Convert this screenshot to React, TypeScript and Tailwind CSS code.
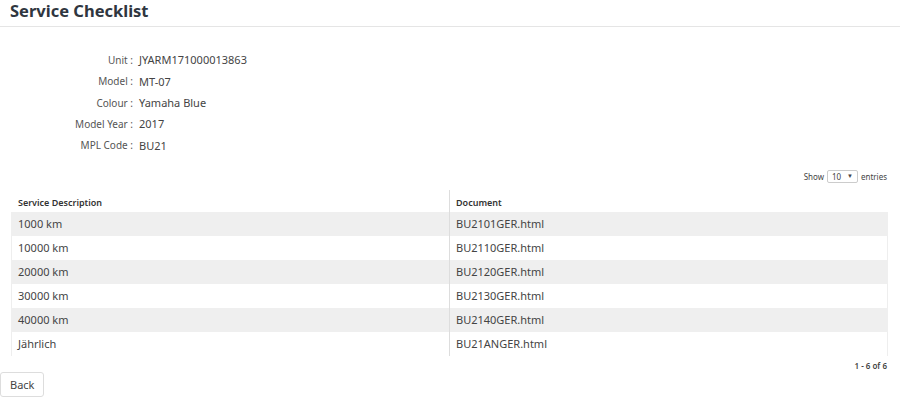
const info: [string, string][] = [
  ["Unit", "JYARM171000013863"],
  ["Model", "MT-07"],
  ["Colour", "Yamaha Blue"],
  ["Model Year", "2017"],
  ["MPL Code", "BU21"],
];

const rows: [string, string][] = [
  ["1000 km", "BU2101GER.html"],
  ["10000 km", "BU2110GER.html"],
  ["20000 km", "BU2120GER.html"],
  ["30000 km", "BU2130GER.html"],
  ["40000 km", "BU2140GER.html"],
  ["Jährlich", "BU21ANGER.html"],
];

export default function App() {
  return (
    <div
      className="w-[900px] h-[407px] bg-white text-[#333] overflow-hidden"
      style={{ fontFamily: '"Noto Sans", "Open Sans", sans-serif' }}
    >
      <div className="h-[27px] border-b border-[#e5e5e5] px-[10px]">
        <h1 className="text-[16.5px] leading-[22px] font-bold text-[#2f3640]">Service Checklist</h1>
      </div>

      <div className="mt-[23px] flex flex-col">
        {info.map(([k, v]) => (
          <div key={k} className="flex h-[21.3px] items-center text-[11px]">
            <span className="w-[133px] text-right text-[10px] text-[#555]">{k}&nbsp;:</span>
            <span className="ml-[6px] text-[#444]">{v}</span>
          </div>
        ))}
      </div>

      <div className="mt-[14px] flex justify-end items-center pr-[13px] text-[8px] text-[#444] gap-[3px]">
        <span>Show</span>
        <div className="flex items-center justify-between w-[31px] h-[13px] border border-[#ccc] rounded-[2px] px-[4px]">
          <span>10</span>
          <span className="text-[6px]">▼</span>
        </div>
        <span>entries</span>
      </div>

      <div className="mx-[11px] mt-[7px] w-[877px]">
        <div className="flex h-[22px] text-[9px] font-semibold text-[#333]">
          <div className="w-[438px] pl-[7px] h-full flex items-center pt-[3px]">Service Description</div>
          <div className="flex-1 pl-[6px] h-full flex items-center pt-[3px] border-l border-[#ddd]">Document</div>
        </div>
        {rows.map(([a, b], i) => (
          <div
            key={a}
            className={`flex h-[24px] items-center text-[11px] text-[#444] border-l border-r ${i % 2 === 0 ? "bg-[#efefef] border-[#efefef]" : "bg-white border-[#eee]"}`}
          >
            <div className="w-[437px] pl-[6px]">{a}</div>
            <div className="flex-1 h-full flex items-center pl-[6px] border-l border-[#ddd]">{b}</div>
          </div>
        ))}
      </div>

      <div className="mt-[4px] pr-[13px] text-right text-[8px] leading-[12px] font-semibold text-[#444]">1 - 6 of 6</div>

      <button className="block h-[25px] px-[9px] border border-[#ddd] rounded-[3px] bg-white text-[11px] text-[#444]">
        Back
      </button>
    </div>
  );
}
